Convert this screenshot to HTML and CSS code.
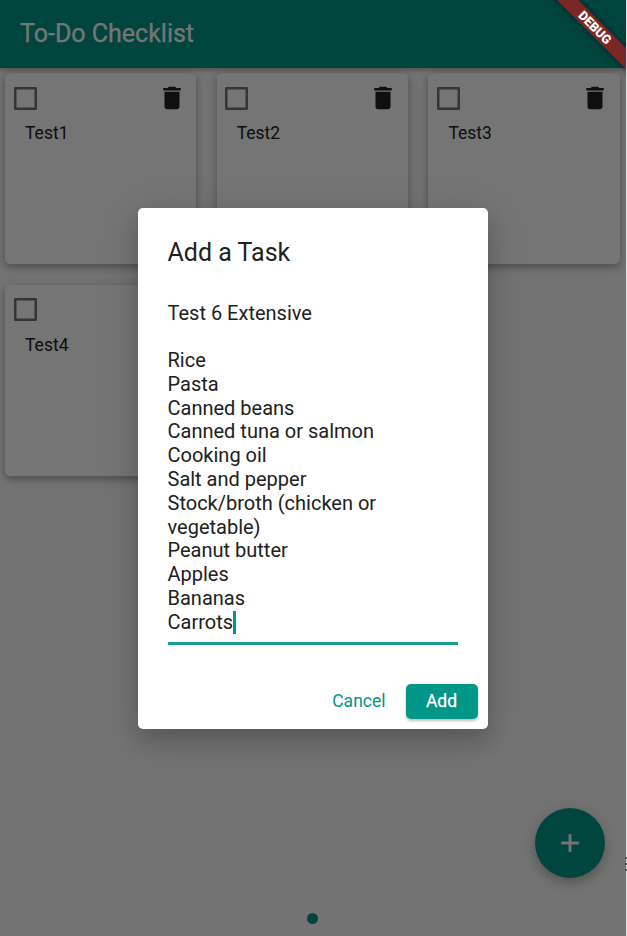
FILE: index.html
```
<!DOCTYPE html>
<html lang="en">
<head>
<meta charset="utf-8">
<title>To-Do Checklist</title>
<link rel="stylesheet" href="styles.css">
</head>
<body>
<div class="app">
  <header class="app-bar"><h1>To-Do Checklist</h1></header>
  <main class="grid">
    <article class="card">
      <div class="card-head"><svg class="checkbox" viewBox="0 0 23 23"><rect x="1.250" y="1.250" width="20.500" height="20.500"/></svg><svg class="trash" viewBox="0 0 24 24"><path d="M6 19c0 1.100.9 2 2 2h8c1.100 0 2-.9 2-2V7H6v12zM19 4h-3.500l-1-1h-5l-1 1H5v2h14V4z"/></svg></div>
      <p>Test1</p>
    </article>
    <article class="card">
      <div class="card-head"><svg class="checkbox" viewBox="0 0 23 23"><rect x="1.250" y="1.250" width="20.500" height="20.500"/></svg><svg class="trash" viewBox="0 0 24 24"><path d="M6 19c0 1.100.9 2 2 2h8c1.100 0 2-.9 2-2V7H6v12zM19 4h-3.500l-1-1h-5l-1 1H5v2h14V4z"/></svg></div>
      <p>Test2</p>
    </article>
    <article class="card">
      <div class="card-head"><svg class="checkbox" viewBox="0 0 23 23"><rect x="1.250" y="1.250" width="20.500" height="20.500"/></svg><svg class="trash" viewBox="0 0 24 24"><path d="M6 19c0 1.100.9 2 2 2h8c1.100 0 2-.9 2-2V7H6v12zM19 4h-3.500l-1-1h-5l-1 1H5v2h14V4z"/></svg></div>
      <p>Test3</p>
    </article>
    <article class="card">
      <div class="card-head"><svg class="checkbox" viewBox="0 0 23 23"><rect x="1.250" y="1.250" width="20.500" height="20.500"/></svg><svg class="trash" viewBox="0 0 24 24"><path d="M6 19c0 1.100.9 2 2 2h8c1.100 0 2-.9 2-2V7H6v12zM19 4h-3.500l-1-1h-5l-1 1H5v2h14V4z"/></svg></div>
      <p>Test4</p>
    </article>
  </main>
  <span class="page-dot"></span>
  <button class="fab" aria-label="Add task"><svg viewBox="0 0 24 24"><path d="M19 13h-6v6h-2v-6H5v-2h6V5h2v6h6v2z"/></svg></button>
  <div class="scrim">
    <section class="dialog">
      <h2>Add a Task</h2>
      <div class="field">Test 6 Extensive

Rice
Pasta
Canned beans
Canned tuna or salmon
Cooking oil
Salt and pepper
Stock/broth (chicken or vegetable)
Peanut butter
Apples
Bananas
Carrots<span class="caret"></span></div>
      <div class="actions"><button class="cancel">Cancel</button><button class="add">Add</button></div>
    </section>
  </div>
  <div class="debug">DEBUG</div>
</div>
<div class="edge"><i></i><i></i><i></i></div>
</body>
</html>
```

FILE: styles.css
```
* { box-sizing: border-box; }
body {
  margin: 0;
  height: 936px;
  display: flex;
  overflow: hidden;
  background: #e4e4e4;
  font-family: Roboto, sans-serif;
  color: #212121;
}
h1, h2, p { margin: 0; }
button { border: 0; padding: 0; font: inherit; }
.app {
  position: relative;
  width: 626px;
  height: 936px;
  overflow: hidden;
  background: #fafafa;
}
.app-bar {
  position: relative;
  height: 68px;
  padding-left: 20px;
  display: flex;
  align-items: center;
  background: #009688;
  box-shadow: 0 2px 5px rgba(0, 0, 0, .3);
}
.app-bar h1 {
  color: #fff;
  font-size: 25px;
  font-weight: 400;
  line-height: 30px;
  -webkit-text-stroke: .25px #fff;
}
.grid {
  display: grid;
  grid-template-columns: repeat(3, 191.300px);
  grid-auto-rows: 191.300px;
  gap: 20.400px;
  padding: 5px;
}
.card {
  background: #fff;
  border-radius: 5px;
  box-shadow: 0 4px 6px rgba(0, 0, 0, .18), 0 2px 12px rgba(0, 0, 0, .18);
}
.card-head {
  display: flex;
  justify-content: space-between;
  align-items: center;
  padding: 10px 9.500px 0 8.500px;
}
.checkbox {
  width: 23px;
  height: 23px;
  fill: none;
  stroke: #757575;
  stroke-width: 2.500;
  stroke-linejoin: round;
}
.trash { width: 30px; height: 30px; fill: #212121; }
.card p {
  padding: 10px 0 0 20px;
  font-size: 17.500px;
  line-height: 21px;
}
.fab {
  position: absolute;
  left: 535px;
  top: 808px;
  width: 70px;
  height: 70px;
  display: grid;
  place-items: center;
  border-radius: 50%;
  background: #009688;
  box-shadow: 0 6px 10px rgba(0, 0, 0, .16), 0 2px 18px rgba(0, 0, 0, .12);
}
.fab svg { width: 30px; height: 30px; fill: #fff; stroke: #fff; stroke-width: .3; }
.page-dot {
  position: absolute;
  left: 307px;
  top: 912.500px;
  width: 11px;
  height: 11px;
  border-radius: 50%;
  background: #009688;
}
.scrim {
  position: absolute;
  inset: 0;
  display: grid;
  place-items: center;
  padding-right: 1px;
  background: rgba(0, 0, 0, .54);
}
.dialog {
  width: 350px;
  height: 521px;
  display: flex;
  flex-direction: column;
  padding: 30px 10px 10px 30px;
  border-radius: 5px;
  background: #fff;
  box-shadow: 0 12px 20px rgba(0, 0, 0, .14), 0 8px 40px rgba(0, 0, 0, .14);
}
.dialog h2 {
  font-size: 25px;
  font-weight: 400;
  line-height: 30px;
}
.field {
  width: 290px;
  margin-top: 34px;
  padding-bottom: 7px;
  border-bottom: 3px solid #1a9e8f;
  white-space: pre-wrap;
  font-size: 20px;
  line-height: 23.800px;
}
.caret {
  display: inline-block;
  width: 2.500px;
  height: 23px;
  margin-right: -3px;
  vertical-align: -5px;
  margin-top: -5px;
  background: #009688;
}
.actions {
  margin-top: auto;
  display: flex;
  justify-content: flex-end;
  align-items: center;
  gap: 10px;
  font-size: 17.500px;
  font-weight: 400;
}
.cancel { padding: 0 10px; color: #009688; background: none; }
.add {
  width: 72px;
  height: 35px;
  border-radius: 5px;
  color: #fff;
  background: #009688;
  -webkit-text-stroke: .25px #fff;
  box-shadow: 0 2px 3px rgba(0, 0, 0, .25);
}
.debug {
  position: absolute;
  left: 524.500px;
  top: 20px;
  width: 140px;
  height: 15px;
  transform: rotate(45deg);
  background: #7c2726;
  color: #fff;
  font-size: 12.750px;
  font-weight: 900;
  line-height: 15px;
  text-align: center;
  box-shadow: 0 0 7px rgba(0, 0, 0, .5);
}
.edge {
  position: relative;
  width: 2px;
  margin-left: -1px;
  display: flex;
  flex-direction: column;
  gap: 4px;
  padding-top: 857px;
}
.edge i { width: 2px; height: 2px; background: #555; }
```
